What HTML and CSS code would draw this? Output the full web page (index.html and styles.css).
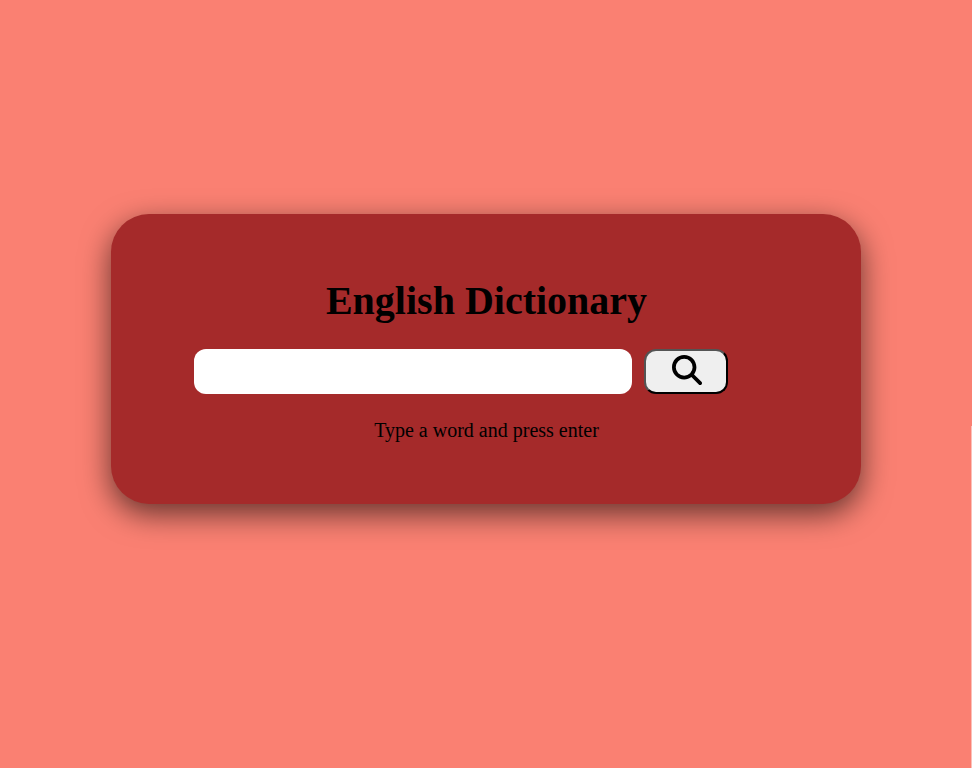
FILE: index.html
```html
<!DOCTYPE html>
<html lang="en">
<head>
<meta charset="utf-8">
<title>English Dictionary</title>
<link rel="stylesheet" href="styles.css">
</head>
<body>
<main class="container">
  <h1 class="heading">English Dictionary</h1>
  <div class="search">
    <input class="search-input" type="text" aria-label="Word">
    <button class="search-button" type="button" aria-label="Search">
      <svg class="search-icon" viewBox="0 0 512 512"><path d="M416 208c0 45.900-14.900 88.300-40 122.700L502.600 457.400c12.500 12.500 12.500 32.800 0 45.300s-32.800 12.500-45.300 0L330.700 376c-34.400 25.200-76.800 40-122.700 40C93.100 416 0 322.900 0 208S93.100 0 208 0S416 93.100 416 208zM208 352a144 144 0 1 0 0-288 144 144 0 1 0 0 288z"/></svg>
    </button>
  </div>
  <p class="info">Type a word and press enter</p>
</main>
<div class="edge"></div>
</body>
</html>
```
FILE: styles.css
```css
* {
  box-sizing: border-box;
}

body {
  margin: 0;
  height: 768px;
  padding-top: 214px;
  background: salmon;
  font-family: "Liberation Serif", "Times New Roman", serif;
  overflow: hidden;
}

.container {
  width: 750px;
  height: 290px;
  margin: 0 auto;
  padding: 64px 83px 0;
  background: brown;
  border-radius: 38px;
  box-shadow: 0 10px 30px rgba(0, 0, 0, 0.6);
  text-align: center;
}

.heading {
  margin: 0;
  padding-left: 1px;
  font-size: 40px;
  line-height: 46px;
}

.search {
  display: flex;
  gap: 12px;
  margin-top: 25px;
}

.search-input {
  width: 438px;
  height: 45px;
  border: 0;
  border-radius: 12px;
  background: #fff;
}

.search-button {
  width: 84px;
  height: 45px;
  padding: 0 0 0 1px;
  border: 2px outset #000;
  border-radius: 12px;
  background: #efefef;
}

.search-icon {
  display: block;
  width: 30px;
  height: 30px;
  margin: -4px auto 0;
}

.info {
  margin: 25px 0 0;
  padding-left: 1px;
  font-size: 20px;
  line-height: 23px;
}

.edge {
  position: absolute;
  right: 0;
  top: 426px;
  bottom: 0;
  width: 1px;
  background: #fcc0b8;
}
```
